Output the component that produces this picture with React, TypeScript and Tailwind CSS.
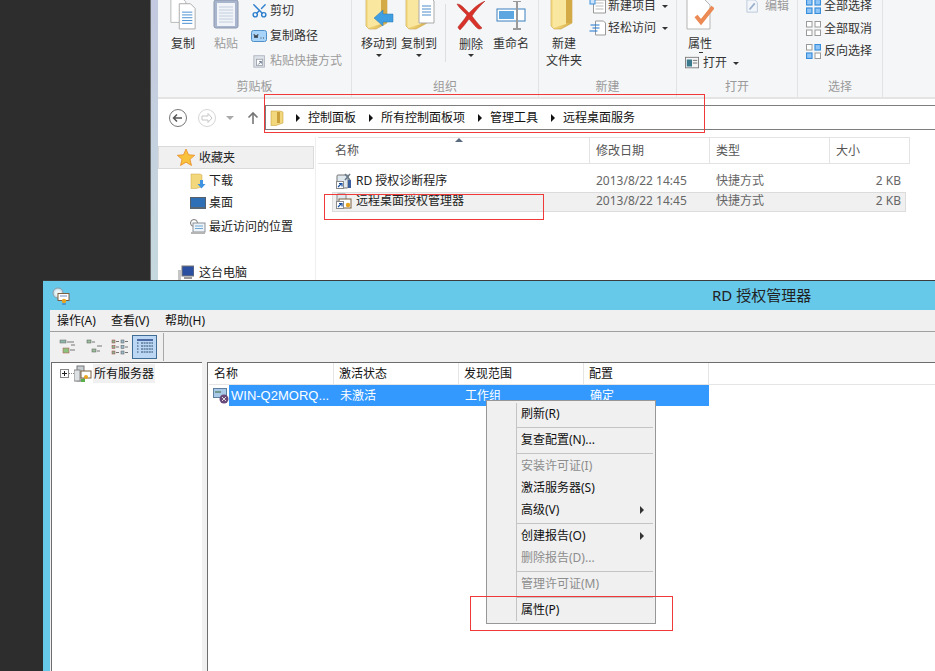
import React from "react";
import { Scissors } from "lucide-react";

const Folder = ({ w = 32, h = 34, arrow, doc }: { w?: number; h?: number; arrow?: boolean; doc?: boolean }) => (
  <svg width={w} height={h} viewBox="0 0 32 34">
    <defs>
      <linearGradient id="fg" x1="0" y1="0" x2="1" y2="0">
        <stop offset="0" stopColor="#f7df8a" />
        <stop offset="1" stopColor="#d9ae44" />
      </linearGradient>
    </defs>
    <path d="M3 0h19l2 2v24l-11 6H6l-3-3z" fill="url(#fg)" stroke="#c9a445" strokeWidth=".6" />
    <path d="M5 2l13-1v26L5 31z" fill="#f9e7a0" />
    <path d="M18 1h6v25h-6z" fill="#d3aa45" />
    {arrow && <path d="M11 21l9-8v4h10v8H20v4z" fill="#3f9fe0" stroke="#2a78b5" strokeWidth=".5" />}
    {doc && (
      <g>
        <path d="M16 0h11l4 4v22H16z" fill="#fff" stroke="#a9a9a9" />
        <path d="M19 9h9M19 12h9M19 15h9M19 18h9" stroke="#4d8bc9" />
      </g>
    )}
  </svg>
);

const Tiny = ({ children, w = 16, h = 16 }: { children: React.ReactNode; w?: number; h?: number }) => (
  <svg width={w} height={h} viewBox="0 0 16 16" className="shrink-0">
    {children}
  </svg>
);

const Caret = () => <span className="inline-block w-0 h-0 border-l-[3px] border-r-[3px] border-t-[3px] border-l-transparent border-r-transparent border-t-[#333]" />;

const Big = ({ icon, label, caret, w = "w-[40px]" }: { icon: React.ReactNode; label: React.ReactNode; caret?: boolean; w?: string }) => (
  <div className={`${w} shrink-0 flex flex-col items-center`}>
    <div className="h-[35px] flex items-end justify-center pb-[4px]">{icon}</div>
    <div className="leading-[17px] text-center whitespace-nowrap">{label}</div>
    {caret && <div className="leading-none h-[6px] flex items-center"><Caret /></div>}
  </div>
);

const Small = ({ icon, label, h = "h-[22px]", gray, caret }: { icon: React.ReactNode; label: string; h?: string; gray?: boolean; caret?: boolean }) => (
  <div className={`${h} flex items-center whitespace-nowrap ${gray ? "text-[#9b9b9b]" : ""}`}>
    <span className="w-[19px] flex shrink-0">{icon}</span>
    <span>{label}</span>
    {caret && <span className="ml-[6px] flex"><Caret /></span>}
  </div>
);

const Group = ({ w, label, children }: { w: string; label: string; children: React.ReactNode }) => (
  <div className={`${w} shrink-0 h-[97px] flex flex-col border-r border-[#e2e3e5]`}>
    <div className="h-[78px] flex">{children}</div>
    <div className="h-[19px] text-center text-[#9a9a9a] leading-[18px]">{label}</div>
  </div>
);

const Arrow = () => <span className="w-0 h-0 border-y-[4px] border-l-[4px] border-y-transparent border-l-[#111] ml-[13px] mr-[8px]" />;

const SelGrid = ({ on }: { on: "all" | "none" | "inv" }) => (
  <svg width="15" height="15" viewBox="0 0 15 15" className="shrink-0">
    {[0, 8.5].map((y, i) =>
      [0, 8.5].map((x, j) => {
        const filled = on === "all" || (on === "inv" && ((i === 0 && j === 1) || (i === 1 && j === 0)));
        return <rect key={`${i}${j}`} x={x + 0.5} y={y + 0.5} width="5.5" height="5.5" fill={filled ? "#8fc5f7" : "#fff"} stroke={filled ? "#3a8fdc" : "#9a9a9a"} strokeWidth={filled ? 1.2 : 1} />;
      })
    )}
  </svg>
);

const ShortcutArrow = () => (
  <g>
    <rect x="0.5" y="8.5" width="7" height="7" fill="#fff" stroke="#8a8a8a" />
    <path d="M2 14l3-3M3 10.5h3v3" stroke="#1b4fa0" strokeWidth="1.2" fill="none" />
  </g>
);

const ToolIcon = ({ kind }: { kind: number }) => (
  <svg width="18" height="18" viewBox="0 0 18 18" className="shrink-0">
    {kind === 0 && (
      <g>
        <rect x="1" y="2" width="6" height="3" fill="#8fb5a8" stroke="#666" strokeWidth=".5" />
        <path d="M8 4h7M12 7h4M5 13h2M11 12h5" stroke="#555" strokeWidth=".8" />
        <rect x="4" y="10" width="6" height="5" fill="#8cc07c" stroke="#b05050" strokeWidth=".5" />
      </g>
    )}
    {kind === 1 && (
      <g>
        <rect x="2" y="2" width="4" height="3" fill="#9abf9a" stroke="#555" strokeWidth=".5" />
        <path d="M7 4h3M12 8h5" stroke="#555" strokeWidth=".8" />
        <rect x="7" y="11" width="4" height="3" fill="#9abf9a" stroke="#555" strokeWidth=".5" />
        <path d="M12 13h3" stroke="#555" strokeWidth=".8" />
      </g>
    )}
    {kind === 2 && (
      <g>
        {[2, 7.5, 13].map((y) => (
          <g key={y}>
            <rect x="1" y={y} width="3" height="3" fill="#8fb58f" stroke="#a04040" strokeWidth=".5" />
            <path d={`M5 ${y + 1.5}h3`} stroke="#555" strokeWidth=".8" />
            <rect x="10" y={y} width="3" height="3" fill="#9abccb" stroke="#555" strokeWidth=".5" />
            <path d={`M14 ${y + 1.5}h3`} stroke="#555" strokeWidth=".8" />
          </g>
        ))}
      </g>
    )}
    {kind === 3 && (
      <g>
        <path d="M1 2h16" stroke="#1c3c80" strokeWidth="1.4" />
        {[5, 8, 11, 14].map((y) => (
          <path key={y} d={`M1 ${y}h1.5M5 ${y}h12`} stroke="#2a4a70" strokeDasharray="2 .6" />
        ))}
      </g>
    )}
  </svg>
);

const Cert = () => (
  <svg width="18" height="18" viewBox="0 0 18 18" className="shrink-0">
    <circle cx="6" cy="6" r="5" fill="#cfe3ea" stroke="#8b9aa5" />
    <circle cx="6" cy="6" r="3" fill="#eaf4f7" />
    <rect x="6" y="6.5" width="11" height="7" fill="#fff" stroke="#7a6040" />
    <path d="M8 9h7" stroke="#6f8fc0" />
    <circle cx="12" cy="14" r="2.2" fill="#e8a41c" />
    <path d="M11 16v2M13 16v2" stroke="#3070c0" />
  </svg>
);

const Row = ({ label, disabled, more }: { label: string; disabled?: boolean; more?: boolean }) => (
  <div className={`h-[22px] flex items-center pl-[34px] pr-[11px] justify-between whitespace-nowrap leading-none ${disabled ? "text-[#8d8d8d]" : "text-[#111]"}`}>
    <span>{label}</span>
    {more && <span className="w-0 h-0 border-y-[4px] border-l-[4px] border-y-transparent border-l-[#333]" />}
  </div>
);
const Sep = () => (
  <div className="h-[4px] pl-[30px] pr-[2px] flex items-center">
    <div className="h-px w-full bg-[#c4c4c4]" />
  </div>
);

const RedBox = ({ className }: { className: string }) => <div className={`absolute border border-[#f03a3a] ${className}`} />;

const Side = ({ icon, label, className = "" }: { icon: React.ReactNode; label: string; className?: string }) => (
  <div className={`h-[22px] flex items-center whitespace-nowrap pl-[31px] ${className}`}>
    <span className="w-[19px] flex shrink-0">{icon}</span>
    <span>{label}</span>
  </div>
);

const FileRow = ({ icon, name, sel }: { icon: React.ReactNode; name: string; sel?: boolean }) => (
  <div className={`ml-[14px] w-[574px] h-[20px] flex items-center border ${sel ? "mt-px pb-[2px] bg-[#f0f0f0] border-[#dcdcdc]" : "border-transparent"}`}>
    <span className="w-[23px] pl-[3px] flex shrink-0">{icon}</span>
    <span className="w-[240px] shrink-0 text-[#222] whitespace-nowrap">{name}</span>
    <span className="w-[120px] shrink-0 text-[#666]">2013/8/22 14:45</span>
    <span className="w-[120px] shrink-0 text-[#666]">快捷方式</span>
    <span className="w-[65px] shrink-0 text-right text-[#666]">2 KB</span>
  </div>
);

export default function App() {
  return (
    <div className="relative w-[935px] h-[671px] overflow-hidden bg-[#2d2d2d] text-[12px] text-[#222] font-['Noto_Sans','Noto_Sans_CJK_SC',sans-serif]">
      {/* File explorer window */}
      <div className="absolute left-[150px] top-0 w-[785px] h-[281px] flex border-l border-[#6a6a6a] bg-white">
        <div className="w-[7px] shrink-0 bg-gradient-to-b from-[#c3c9e0] to-[#c6d9de]" />
        <div className="flex-1 flex flex-col min-w-0">
          <div className="h-[99px] flex bg-[#f5f6f7] border-b-2 border-[#e4e4e4] overflow-hidden text-[#333]">
            <Group w="w-[194px]" label="剪贴板">
              <div className="flex pl-[5px] gap-[3px]">
                <Big
                  label="复制"
                  icon={
                    <svg width="28" height="34" viewBox="0 0 30 34">
                      <path d="M2 0h12l4 4v22H2z" fill="#fff" stroke="#b5b5b5" />
                      <path d="M11 6h12l5 5v22H11z" fill="#fff" stroke="#a8a8a8" />
                      <path d="M14 15h11M14 18h11M14 21h11M14 24h11M14 27h11" stroke="#3f8ad0" />
                    </svg>
                  }
                />
                <Big
                  label={<span className="text-[#9b9b9b]">粘贴</span>}
                  icon={
                    <svg width="26" height="32" viewBox="0 0 26 32">
                      <rect x="1" y="1" width="24" height="28" rx="2" fill="#a9b5cc" stroke="#8c98b0" />
                      <rect x="4" y="4" width="18" height="23" fill="#f0f3f8" />
                      <path d="M6 8h14M6 11h14M6 14h14M6 17h14M6 20h14M6 23h14" stroke="#c3cede" />
                    </svg>
                  }
                />
              </div>
              <div className="ml-[5px] -mt-[2px]">
                <Small h="h-[25px]" icon={<Scissors size={17} color="#2f7fcf" strokeWidth={2} className="-rotate-90" />} label="剪切" />
                <Small
                  h="h-[25px]"
                  icon={
                    <Tiny w={16} h={16}>
                      <rect x="0.5" y="2.5" width="15" height="11" rx="2" fill="#a9d4fa" stroke="#4f8fc8" />
                      <path d="M3 6l1 4 1-3 1 3 1-4M9.5 10h1M12 10h1" stroke="#222" fill="none" strokeWidth=".8" />
                    </Tiny>
                  }
                  label="复制路径"
                />
                <Small
                  h="h-[25px]"
                  gray
                  icon={
                    <span className="pl-[2px] flex">
                      <Tiny w={14} h={16}>
                        <rect x="1" y="2" width="12" height="13" fill="#dfe3ea" stroke="#aab0ba" />
                        <rect x="4" y="6" width="7" height="7" fill="#fff" stroke="#9aa0aa" />
                        <path d="M6 12l3-3M7 8.5h2.5V11" stroke="#5c6c80" fill="none" />
                      </Tiny>
                    </span>
                  }
                  label="粘贴快捷方式"
                />
              </div>
            </Group>
            <Group w="w-[187px]" label="组织">
              <div className="flex pl-[7px]">
                <Big caret label="移动到" icon={<Folder arrow />} />
                <Big caret label="复制到" icon={<Folder doc />} />
                <div className="w-px h-[58px] mt-[4px] mx-[6px] bg-[#dedede]" />
                <Big
                  caret
                  w="w-[38px]"
                  label={<span className="relative top-[1px]">删除</span>}
                  icon={
                    <svg width="30" height="30" viewBox="0 0 30 30">
                      <path d="M1 3c4 0 8 5 12 9 5-5 9-9 16-12-5 5-10 10-13 15 3 4 6 8 10 12-2 2-4 1-6-1l-7-8c-3 4-6 8-9 11-1-1-2-2-2-3 3-4 7-8 9-12C7 10 3 7 1 3z" fill="#d8322a" stroke="#a82820" strokeWidth=".5" />
                    </svg>
                  }
                />
                <Big
                  w="w-[42px]"
                  label="重命名"
                  icon={
                    <svg width="30" height="30" viewBox="0 0 30 30">
                      <rect x="1" y="8" width="28" height="12" fill="#fff" stroke="#3a7fc0" />
                      <rect x="3" y="10" width="15" height="8" fill="#5ea6e0" />
                      <path d="M17 0h8M17 28h8M21 0v28" stroke="#9a9a9a" strokeWidth="2" />
                    </svg>
                  }
                />
              </div>
            </Group>
            <Group w="w-[138px]" label="新建">
              <div className="pl-[5px] flex">
                <Big label={<>新建<br />文件夹</>} icon={<Folder />} />
                <div className="pl-[5px]">
                  <div className="-mt-[5px]">
                    <Small
                      caret
                      icon={
                        <Tiny w={17} h={16}>
                          <path d="M4 2h12v13H4z" fill="#fff" stroke="#999" />
                          <path d="M6 5h8M6 8h8M6 11h8" stroke="#bbb" />
                          <rect x="0.5" y="1" width="5" height="5" fill="#cfe4f9" stroke="#3a8fdc" />
                        </Tiny>
                      }
                      label="新建项目"
                    />
                    <Small
                      caret
                      icon={
                        <Tiny w={17} h={16}>
                          <path d="M6 1h8l2 2v12H6z" fill="#fff" stroke="#999" />
                          <path d="M1 5h9M3 8h7M0 11h8" stroke="#1f76d0" strokeWidth="1.2" />
                        </Tiny>
                      }
                      label="轻松访问"
                    />
                  </div>
                </div>
              </div>
            </Group>
            <Group w="w-[121px]" label="打开">
              <div className="flex-col flex pl-[7px] w-[69px]">
                <div className="w-[32px]">
                  <Big
                    w="w-[32px]"
                    label={<span className="relative">属性<span className="absolute left-[11px] top-[17px] w-[4px] h-px bg-[#333]" /></span>}
                    icon={
                      <svg width="28" height="32" viewBox="0 0 28 32">
                        <path d="M1 0h17l6 6v24H1z" fill="#fff" stroke="#b5b5b5" />
                        <path d="M10 17l5 6L27 8" fill="none" stroke="#ec8a55" strokeWidth="4" />
                      </svg>
                    }
                  />
                </div>
                <Small
                  caret
                  icon={
                    <Tiny w={16} h={14}>
                      <rect x="0.5" y="1.5" width="15" height="12" fill="#f5f5f5" stroke="#777" />
                      <rect x="2" y="4" width="6" height="8" fill="#3b7a8c" />
                      <path d="M9 5h5M9 8h5" stroke="#666" />
                    </Tiny>
                  }
                  label="打开"
                />
              </div>
              <div className="-mt-[5px]">
                <Small
                  gray
                  icon={
                    <Tiny w={14} h={16}>
                      <path d="M1 1h9l3 3v11H1z" fill="#f2f5fa" stroke="#b8c6d8" />
                      <path d="M4 12l6-7" stroke="#9ab0cc" strokeWidth="2" />
                    </Tiny>
                  }
                  label="编辑"
                />
              </div>
            </Group>
            <Group w="w-[85px]" label="选择">
              <div className="pl-[8px] -mt-[5px]">
                <div className="h-[22px] flex items-center gap-[3px] whitespace-nowrap"><SelGrid on="all" />全部选择</div>
                <div className="h-[23px] flex items-center gap-[3px] whitespace-nowrap"><SelGrid on="none" />全部取消</div>
                <div className="h-[22px] flex items-center gap-[3px] whitespace-nowrap"><SelGrid on="inv" />反向选择</div>
              </div>
            </Group>
          </div>

          {/* Navigation */}
          <div className="h-[38px] flex pt-[6px]">
            <div className="w-[107px] shrink-0 flex items-center h-[25px] pl-[11px]">
              <svg width="18" height="18" viewBox="0 0 18 18" className="shrink-0">
                <circle cx="9" cy="9" r="8.5" fill="#fff" stroke="#777" />
                <path d="M13 9H5M8 5.5L4.5 9 8 12.5" fill="none" stroke="#555" strokeWidth="1.5" />
              </svg>
              <svg width="18" height="18" viewBox="0 0 18 18" className="shrink-0 ml-[11px]">
                <circle cx="9" cy="9" r="8.5" fill="#fff" stroke="#d5d5d5" />
                <path d="M4 7h6V4.5L14 9l-4 4.5V11H4z" fill="#fff" stroke="#c5c5c5" />
              </svg>
              <span className="ml-[10px] w-0 h-0 border-x-[4px] border-t-[4px] border-x-transparent border-t-[#aaa]" />
              <svg width="12" height="14" viewBox="0 0 12 14" className="ml-[13px] shrink-0">
                <path d="M6 13V2M1.5 6.5L6 2l4.500 4.500" fill="none" stroke="#777" strokeWidth="1.6" />
              </svg>
            </div>
            <div className="flex-1 h-[25px] flex items-center border-y border-l border-[#7d7d7d] pl-[4px] text-[#111]">
              <svg width="14" height="16" viewBox="0 0 14 16" className="shrink-0">
                <path d="M1 1h9l3 1v11l-7 2.500H1z" fill="#f3d77c" stroke="#c9a445" strokeWidth=".6" />
                <path d="M7 2h3v11H7z" fill="#caa03c" />
              </svg>
              <span className="w-0 h-0 border-y-[4px] border-l-[4px] border-y-transparent border-l-[#111] ml-[12px] mr-[8px]" />控制面板<Arrow />所有控制面板项<Arrow />管理工具<Arrow />远程桌面服务
            </div>
          </div>

          {/* Content */}
          <div className="flex flex-1 min-h-0">
            <div className="w-[158px] shrink-0 border-r border-[#efefef] pt-[9px] pl-px">
              <div className="h-[23px] -ml-px flex items-center bg-[#f0f0f0] border border-[#dadada] pl-[18px] mr-px">
                <svg width="18" height="17" viewBox="0 0 18 17" className="shrink-0">
                  <path d="M9 0l2.500 5.800 6.200.5-4.700 4 1.500 6.200L9 13.200 3.500 16.500 5 10.300.3 6.300l6.200-.5z" fill="#f9c23c" stroke="#e88a2a" strokeWidth=".8" />
                </svg>
                <span className="ml-[4px]">收藏夹</span>
              </div>
              <Side
                className="mt-px"
                icon={
                  <Tiny>
                    <path d="M1 1h9l2 1v12l-6 1.500H1z" fill="#f3d77c" stroke="#c9a445" strokeWidth=".5" />
                    <path d="M10 7h3v4h2.500l-4 4.500-4-4.500H10z" fill="#3f93e0" />
                  </Tiny>
                }
                label="下载"
              />
              <Side
                icon={
                  <Tiny>
                    <rect x="0.500" y="2.500" width="15" height="11" fill="#2e6fb5" stroke="#56606a" />
                    <rect x="0" y="12" width="16" height="2" fill="#5a6672" />
                  </Tiny>
                }
                label="桌面"
              />
              <Side
                className="mt-[2px]"
                icon={
                  <Tiny>
                    <circle cx="4" cy="4" r="3.500" fill="#fff" stroke="#777" />
                    <rect x="3" y="4" width="12" height="9" fill="#eef3f7" stroke="#8a9099" />
                    <path d="M5 7h8M5 9.500h8" stroke="#6ea7d8" />
                    <rect x="1" y="13" width="14" height="2" fill="#b5b5b5" />
                  </Tiny>
                }
                label="最近访问的位置"
              />
              <div className="h-[22px] mt-[24px] flex items-center pl-[19px] whitespace-nowrap">
                <svg width="16" height="16" viewBox="0 0 16 16" className="shrink-0">
                  <rect x="4" y="1" width="12" height="10" fill="#2a4fa0" stroke="#777" />
                  <rect x="0" y="5" width="3" height="10" fill="#c5c5c5" />
                  <rect x="6" y="12" width="8" height="2" fill="#999" />
                </svg>
                <span className="ml-[5px]">这台电脑</span>
              </div>
            </div>
            <div className="flex-1 relative pl-[2px]">
              <span className="absolute left-[139px] top-[1px] w-0 h-0 border-x-[4px] border-b-[4px] border-x-transparent border-b-[#5a6b80]" />
              <div className="w-[592px] h-[27px] flex border-y border-r border-[#e3e3e3] text-[#555]">
                <div className="w-[272px] border-r border-[#e3e3e3] pl-[17px] leading-[25px]">名称</div>
                <div className="w-[120px] border-r border-[#e3e3e3] pl-[6px] leading-[25px]">修改日期</div>
                <div className="w-[120px] border-r border-[#e3e3e3] pl-[6px] leading-[25px]">类型</div>
                <div className="flex-1 pl-[6px] leading-[25px]">大小</div>
              </div>
              <div className="pt-[7px]">
                <FileRow
                  name="RD 授权诊断程序"
                  icon={
                    <Tiny>
                      <rect x="1" y="2" width="11" height="13" rx="1" fill="#dfe8ee" stroke="#777" />
                      <path d="M9 1l5 6M14 1L9 7" stroke="#6a7a8a" strokeWidth="1.500" />
                      <rect x="12" y="7" width="3" height="8" fill="#3c5fa0" />
                      <ShortcutArrow />
                    </Tiny>
                  }
                />
                <FileRow
                  sel
                  name="远程桌面授权管理器"
                  icon={
                    <Tiny>
                      <rect x="1" y="1" width="9" height="12" rx="1" fill="#dfe8ee" stroke="#888" />
                      <rect x="3" y="6" width="12" height="9" fill="#fff" stroke="#7a6040" />
                      <circle cx="12" cy="12" r="2.200" fill="#e8a41c" />
                      <ShortcutArrow />
                    </Tiny>
                  }
                />
              </div>
            </div>
          </div>
        </div>
      </div>

      {/* RD licensing manager window */}
      <div className="absolute left-[43px] top-[280px] w-[892px] h-[391px] flex flex-col bg-[#66c9ea] border-t border-[#3c3c3c]">
        <div className="h-[29px] shrink-0 flex items-center pl-[9px] text-[#222]">
          <Cert />
          <span className="ml-[642px] text-[15px] whitespace-nowrap">RD 授权管理器</span>
        </div>
        <div className="ml-[7px] flex-1 flex flex-col bg-[#f0f0f0] min-h-0">
          <div className="h-[22px] shrink-0 flex items-center pl-[7px] border-b border-[#a0a0a0] text-[#111] whitespace-nowrap">
            <span className="w-[54px]">操作(A)</span>
            <span className="w-[54px]">查看(V)</span>
            <span>帮助(H)</span>
          </div>
          <div className="h-[30px] shrink-0 flex items-center pl-[9px]">
            <ToolIcon kind={0} />
            <span className="ml-[8px] flex"><ToolIcon kind={1} /></span>
            <span className="ml-[8px] flex"><ToolIcon kind={2} /></span>
            <span className="ml-[3px] w-[25px] h-[24px] flex items-center justify-center bg-[#bcd7f3] border border-[#3f6d96]"><ToolIcon kind={3} /></span>
            <span className="ml-[6px] w-px h-[28px] bg-[#a8a8a8]" />
          </div>
          <div className="flex-1 flex min-h-0 pl-px">
            <div className="w-[151px] shrink-0 bg-white border-l border-t border-[#6d6d6d] pt-px flex items-start">
              <div className="flex items-center h-[19px] pl-[8px] text-[#111] whitespace-nowrap">
                <span className="w-[9px] h-[9px] border border-[#888] flex items-center justify-center text-[9px] leading-none">
                  <span className="relative w-[5px] h-px bg-[#222]"><span className="absolute left-[2px] -top-[2px] w-px h-[5px] bg-[#222]" /></span>
                </span>
                <span className="w-[5px] border-t border-dotted border-[#888]" />
                <svg width="18" height="18" viewBox="0 0 18 18" className="shrink-0">
                  <rect x="3" y="1" width="7" height="15" fill="#c8ced3" stroke="#777" />
                  <rect x="0" y="5" width="6" height="11" fill="#dde1e4" stroke="#888" />
                  <rect x="7" y="6" width="10" height="7" fill="#fff" stroke="#7a6040" />
                  <circle cx="12" cy="12" r="2" fill="#e8a41c" />
                  <rect x="7" y="14" width="4" height="3" fill="#58b04a" />
                </svg>
                <span className="ml-px bg-[#f0f0f0] px-px h-[19px] leading-[19px]">所有服务器</span>
              </div>
            </div>
            <div className="w-[5px] shrink-0" />
            <div className="flex-1 bg-white border-l border-t border-[#6d6d6d] pl-px min-w-0">
              <div className="h-[22px] flex text-[#111] border-b border-[#e5e5e5] w-full">
                <div className="w-[125px] border-r border-[#e5e5e5] pl-[5px] leading-[21px]">名称</div>
                <div className="w-[125px] border-r border-[#e5e5e5] pl-[5px] leading-[21px]">激活状态</div>
                <div className="w-[125px] border-r border-[#e5e5e5] pl-[5px] leading-[21px]">发现范围</div>
                <div className="w-[125px] border-r border-[#e5e5e5] pl-[5px] leading-[21px]">配置</div>
              </div>
              <div className="h-[21px] flex items-center">
                <span className="w-[20px] pl-[4px] flex shrink-0">
                  <svg width="16" height="17" viewBox="0 0 16 17" className="shrink-0">
                    <rect x="0.500" y="1.500" width="13" height="9" fill="#a9c9e8" stroke="#5f7f9f" />
                    <path d="M2 5h6" stroke="#3b6a3b" />
                    <circle cx="11" cy="12" r="4.500" fill="#6a4a7a" />
                    <path d="M9 10l4 4M13 10l-4 4" stroke="#ddd" />
                  </svg>
                </span>
                <div className="flex h-[21px] items-center bg-[#3399ff] text-white whitespace-nowrap w-[480px]">
                  <span className="w-[111px] pl-[2px] text-[13px] font-['Liberation_Sans',sans-serif]">WIN-Q2MORQ...</span>
                  <span className="w-[125px]">未激活</span>
                  <span className="w-[125px]">工作组</span>
                  <span>确定</span>
                </div>
              </div>
            </div>
          </div>
        </div>
      </div>

      {/* Context menu */}
      <div className="absolute left-[486px] top-[400px] w-[170px] h-[224px] bg-[#f0f0f0] border border-[#979797] pt-[2px] pb-[2px]">
        <div className="absolute left-[29px] top-[2px] bottom-[2px] w-px bg-[#c4c4c4]" />
        <div className="relative">
          <Row label="刷新(R)" />
          <Sep />
          <Row label="复查配置(N)..." />
          <Sep />
          <Row label="安装许可证(I)" disabled />
          <Row label="激活服务器(S)" />
          <Row label="高级(V)" more />
          <Sep />
          <Row label="创建报告(O)" more />
          <Row label="删除报告(D)..." disabled />
          <Sep />
          <Row label="管理许可证(M)" disabled />
          <Sep />
          <Row label="属性(P)" />
        </div>
      </div>

      {/* Red annotations */}
      <RedBox className="left-[264px] top-[94px] w-[441px] h-[39px]" />
      <RedBox className="left-[324px] top-[194px] w-[220px] h-[26px]" />
      <RedBox className="left-[470px] top-[596px] w-[203px] h-[35px]" />
    </div>
  );
}
